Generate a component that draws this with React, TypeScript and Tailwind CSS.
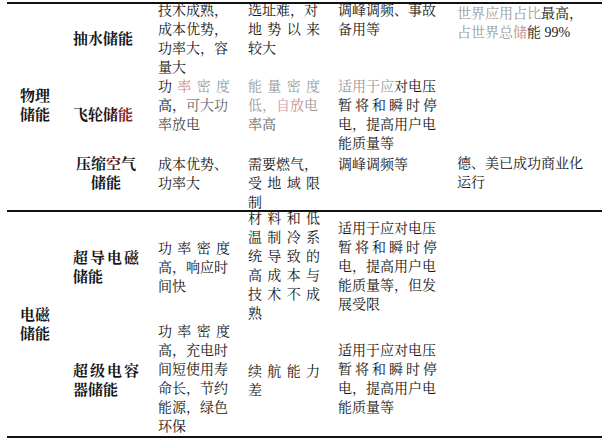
import React from "react";

type Seg = string | [string, string];

// one printed line, 19px high; "spread" stretches the characters over the whole cell
function L({ t, spread, c }: { t: Seg[] | string; spread?: boolean; c?: string }) {
  const segs: Seg[] = typeof t === "string" ? [t] : t;
  if (spread) {
    const chars: [string, string | undefined][] = [];
    segs.forEach((s) => {
      if (typeof s === "string") [...s].forEach((ch) => chars.push([ch, undefined]));
      else [...s[0]].forEach((ch) => chars.push([ch, s[1]]));
    });
    return (
      <div className={"flex justify-between h-[19px] leading-[19px] " + (c ?? "")}>
        {chars.map(([ch, col], i) => (
          <span key={i} style={col ? { color: col } : undefined}>
            {ch}
          </span>
        ))}
      </div>
    );
  }
  return (
    <div className={"h-[19px] leading-[19px] whitespace-nowrap " + (c ?? "")}>
      {segs.map((s, i) =>
        typeof s === "string" ? (
          <span key={i}>{s}</span>
        ) : (
          <span key={i} style={{ color: s[1] }}>
            {s[0]}
          </span>
        )
      )}
    </div>
  );
}

const GRAY = "#9a9a9a";
const PINK = "#c98a8a";

export default function App() {
  return (
    <div className="w-[609px] h-[441px] bg-white overflow-hidden text-[14px] text-[#161616] font-['Liberation_Serif','Noto_Serif_CJK_SC','Noto_Sans_CJK_SC',serif]">
      <div className="ml-[7px] w-[595px] pt-[2px]">
        <div className="h-[2px] bg-[#111]" />

        {/* 物理储能 */}
        <div className="flex -mt-[3px] h-[209px]">
          <div className="w-[66px] pl-[13px] flex flex-col justify-center pt-[1px] text-[15px] font-bold">
            <L t="物理" />
            <L t="储能" />
          </div>
          <div className="flex-1 flex flex-col">
            {/* 抽水储能 */}
            <div className="flex h-[76px]">
              <div className="w-[85px] flex items-center">
                <div className="w-[66px] text-[15px] font-bold">
                  <L t="抽水储能" />
                </div>
              </div>
              <div className="w-[90px]">
                <div className="w-[72px]">
                  <L t="技术成熟，" />
                  <L t="成本优势，" />
                  <L t="功率大，容" />
                  <L t="量大" />
                </div>
              </div>
              <div className="w-[90px]">
                <div className="w-[72px]">
                  <L t="选址难，对" />
                  <L t="地势以来" spread />
                  <L t="较大" />
                </div>
              </div>
              <div className="w-[119px]">
                <div className="w-[99px]">
                  <L t="调峰调频、事故" />
                  <L t="备用等" />
                </div>
              </div>
              <div className="flex-1 pt-[3px]">
                <L t={[["世界应用占比", GRAY], "最高，"]} />
                <L t={[["占世界总", GRAY], ["储", PINK], "能 99%"]} />
              </div>
            </div>

            {/* 飞轮储能 */}
            <div className="flex h-[76px]">
              <div className="w-[85px] flex items-center">
                <div className="w-[66px] text-[15px] font-bold">
                  <L t={["飞轮", ["储", "#3a0c0c"], ["能", "#8e1f1f"]]} />
                </div>
              </div>
              <div className="w-[90px]">
                <div className="w-[72px]">
                  <L t={["功", ["率", PINK], ["密度", GRAY]]} spread />
                  <L t={["高，", ["可大功", "#666"]]} />
                  <L t="率放电" c="text-[#444]" />
                </div>
              </div>
              <div className="w-[90px]">
                <div className="w-[72px]">
                  <L t={[["能量密度", GRAY]]} spread />
                  <L t={[["低，", GRAY], ["自", "#c9a0a8"], ["放", PINK], ["电", GRAY]]} />
                  <L t={[["率高", "#666"]]} />
                </div>
              </div>
              <div className="w-[119px]">
                <div className="w-[99px]">
                  <L t={[["适用于应", GRAY], "对电压"]} />
                  <L t="暂将和瞬时停" spread />
                  <L t="电，提高用户电" />
                  <L t="能质量等" />
                </div>
              </div>
              <div className="flex-1" />
            </div>

            {/* 压缩空气储能 */}
            <div className="flex h-[57px] pt-[2px]">
              <div className="w-[85px]">
                <div className="w-[66px] text-[15px] font-bold text-center">
                  <L t={["压缩", ["空", "#6e1717"], "气"]} />
                  <L t="储能" />
                </div>
              </div>
              <div className="w-[90px]">
                <div className="w-[72px]">
                  <L t="成本优势、" />
                  <L t="功率大" />
                </div>
              </div>
              <div className="w-[90px]">
                <div className="w-[72px]">
                  <L t="需要燃气，" />
                  <L t="受地域限" spread />
                  <L t="制" />
                </div>
              </div>
              <div className="w-[119px]">
                <div className="w-[99px]">
                  <L t="调峰调频等" />
                </div>
              </div>
              <div className="flex-1 -mt-[1px]">
                <L t="德、美已成功商业化" />
                <L t="运行" />
              </div>
            </div>
          </div>
        </div>

        <div className="h-[2px] bg-[#111]" />

        {/* 电磁储能 */}
        <div className="flex -mt-[3px] h-[227px]">
          <div className="w-[66px] pl-[13px] flex flex-col justify-center pt-[5px] text-[15px] font-bold">
            <L t="电磁" />
            <L t="储能" />
          </div>
          <div className="flex-1 flex flex-col">
            {/* 超导电磁储能 */}
            <div className="flex h-[113px]">
              <div className="w-[85px] pt-[40px]">
                <div className="w-[66px] text-[15px] font-bold">
                  <L t="超导电磁" spread />
                  <L t="储能" />
                </div>
              </div>
              <div className="w-[90px] pt-[30px]">
                <div className="w-[72px]">
                  <L t="功率密度" spread />
                  <L t="高，响应时" />
                  <L t="间快" />
                </div>
              </div>
              <div className="w-[90px]">
                <div className="w-[72px]">
                  <L t="材料和低" spread />
                  <L t="温制冷系" spread />
                  <L t="统导致的" spread />
                  <L t="高成本与" spread />
                  <L t="技术不成" spread />
                  <L t="熟" />
                </div>
              </div>
              <div className="w-[119px] pt-[10px]">
                <div className="w-[99px]">
                  <L t="适用于应对电压" />
                  <L t="暂将和瞬时停" spread />
                  <L t="电，提高用户电" />
                  <L t="能质量等，但发" />
                  <L t="展受限" />
                </div>
              </div>
              <div className="flex-1" />
            </div>

            {/* 超级电容器储能 */}
            <div className="flex h-[114px]">
              <div className="w-[85px] pt-[40px]">
                <div className="w-[66px] text-[15px] font-bold">
                  <L t="超级电容" spread />
                  <L t="器储能" />
                </div>
              </div>
              <div className="w-[90px]">
                <div className="w-[72px]">
                  <L t="功率密度" spread />
                  <L t="高，充电时" />
                  <L t="间短使用寿" />
                  <L t="命长，节约" />
                  <L t="能源，绿色" />
                  <L t="环保" />
                </div>
              </div>
              <div className="w-[90px] pt-[40px]">
                <div className="w-[72px]">
                  <L t="续航能力" spread />
                  <L t="差" />
                </div>
              </div>
              <div className="w-[119px] pt-[19px]">
                <div className="w-[99px]">
                  <L t="适用于应对电压" />
                  <L t="暂将和瞬时停" spread />
                  <L t="电，提高用户电" />
                  <L t="能质量等" />
                </div>
              </div>
              <div className="flex-1" />
            </div>
          </div>
        </div>

        <div className="h-[2px] bg-[#111]" />
      </div>
    </div>
  );
}
